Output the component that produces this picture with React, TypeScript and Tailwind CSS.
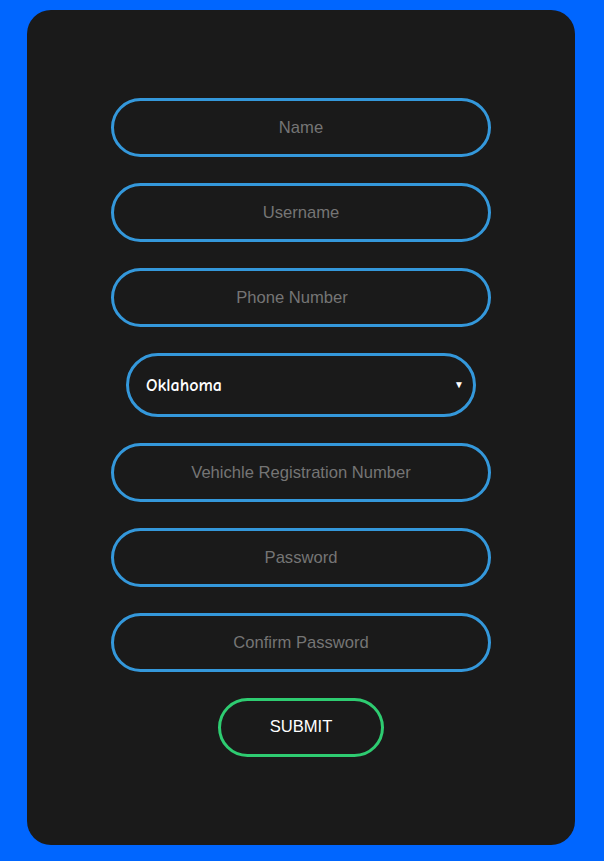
import React from "react";

const inputCls =
  "w-[380px] h-[59px] rounded-full border-[3px] border-[#3498db] bg-transparent text-center text-[16.6px] text-white placeholder:text-[#757575] outline-none";

export default function App() {
  return (
    <div className="min-h-[861px] w-[604px] bg-[#0066ff] pt-[10px] pb-[16px] flex justify-center" style={{ fontFamily: '"Liberation Sans", Arial, sans-serif' }}>
      <div className="w-[548px] h-[835px] rounded-[24px] bg-[#1a1a1a] flex flex-col items-center pt-[88px] gap-[26px] ml-[-2px]">
        <input className={inputCls} placeholder="Name" />
        <input className={inputCls} placeholder="Username" />
        <input className={inputCls + " pr-[18px]"} placeholder="Phone Number" />
        <div className="w-[350px] h-[64px] rounded-full border-[3px] border-[#3498db] flex items-center justify-between pl-[17px] pr-[9px]">
          <span className="text-white text-[18px] font-bold" style={{ fontFamily: '"Comic Neue", "Comic Sans MS", Lato, sans-serif' }}>Oklahoma</span>
          <span className="text-white text-[10px] leading-none">▼</span>
        </div>
        <input className={inputCls} placeholder="Vehichle Registration Number" />
        <input className={inputCls} placeholder="Password" />
        <input className={inputCls} placeholder="Confirm Password" />
        <button className="w-[166px] h-[59px] rounded-full border-[3px] border-[#2ecc71] text-white text-[16.6px] bg-transparent">SUBMIT</button>
      </div>
    </div>
  );
}
